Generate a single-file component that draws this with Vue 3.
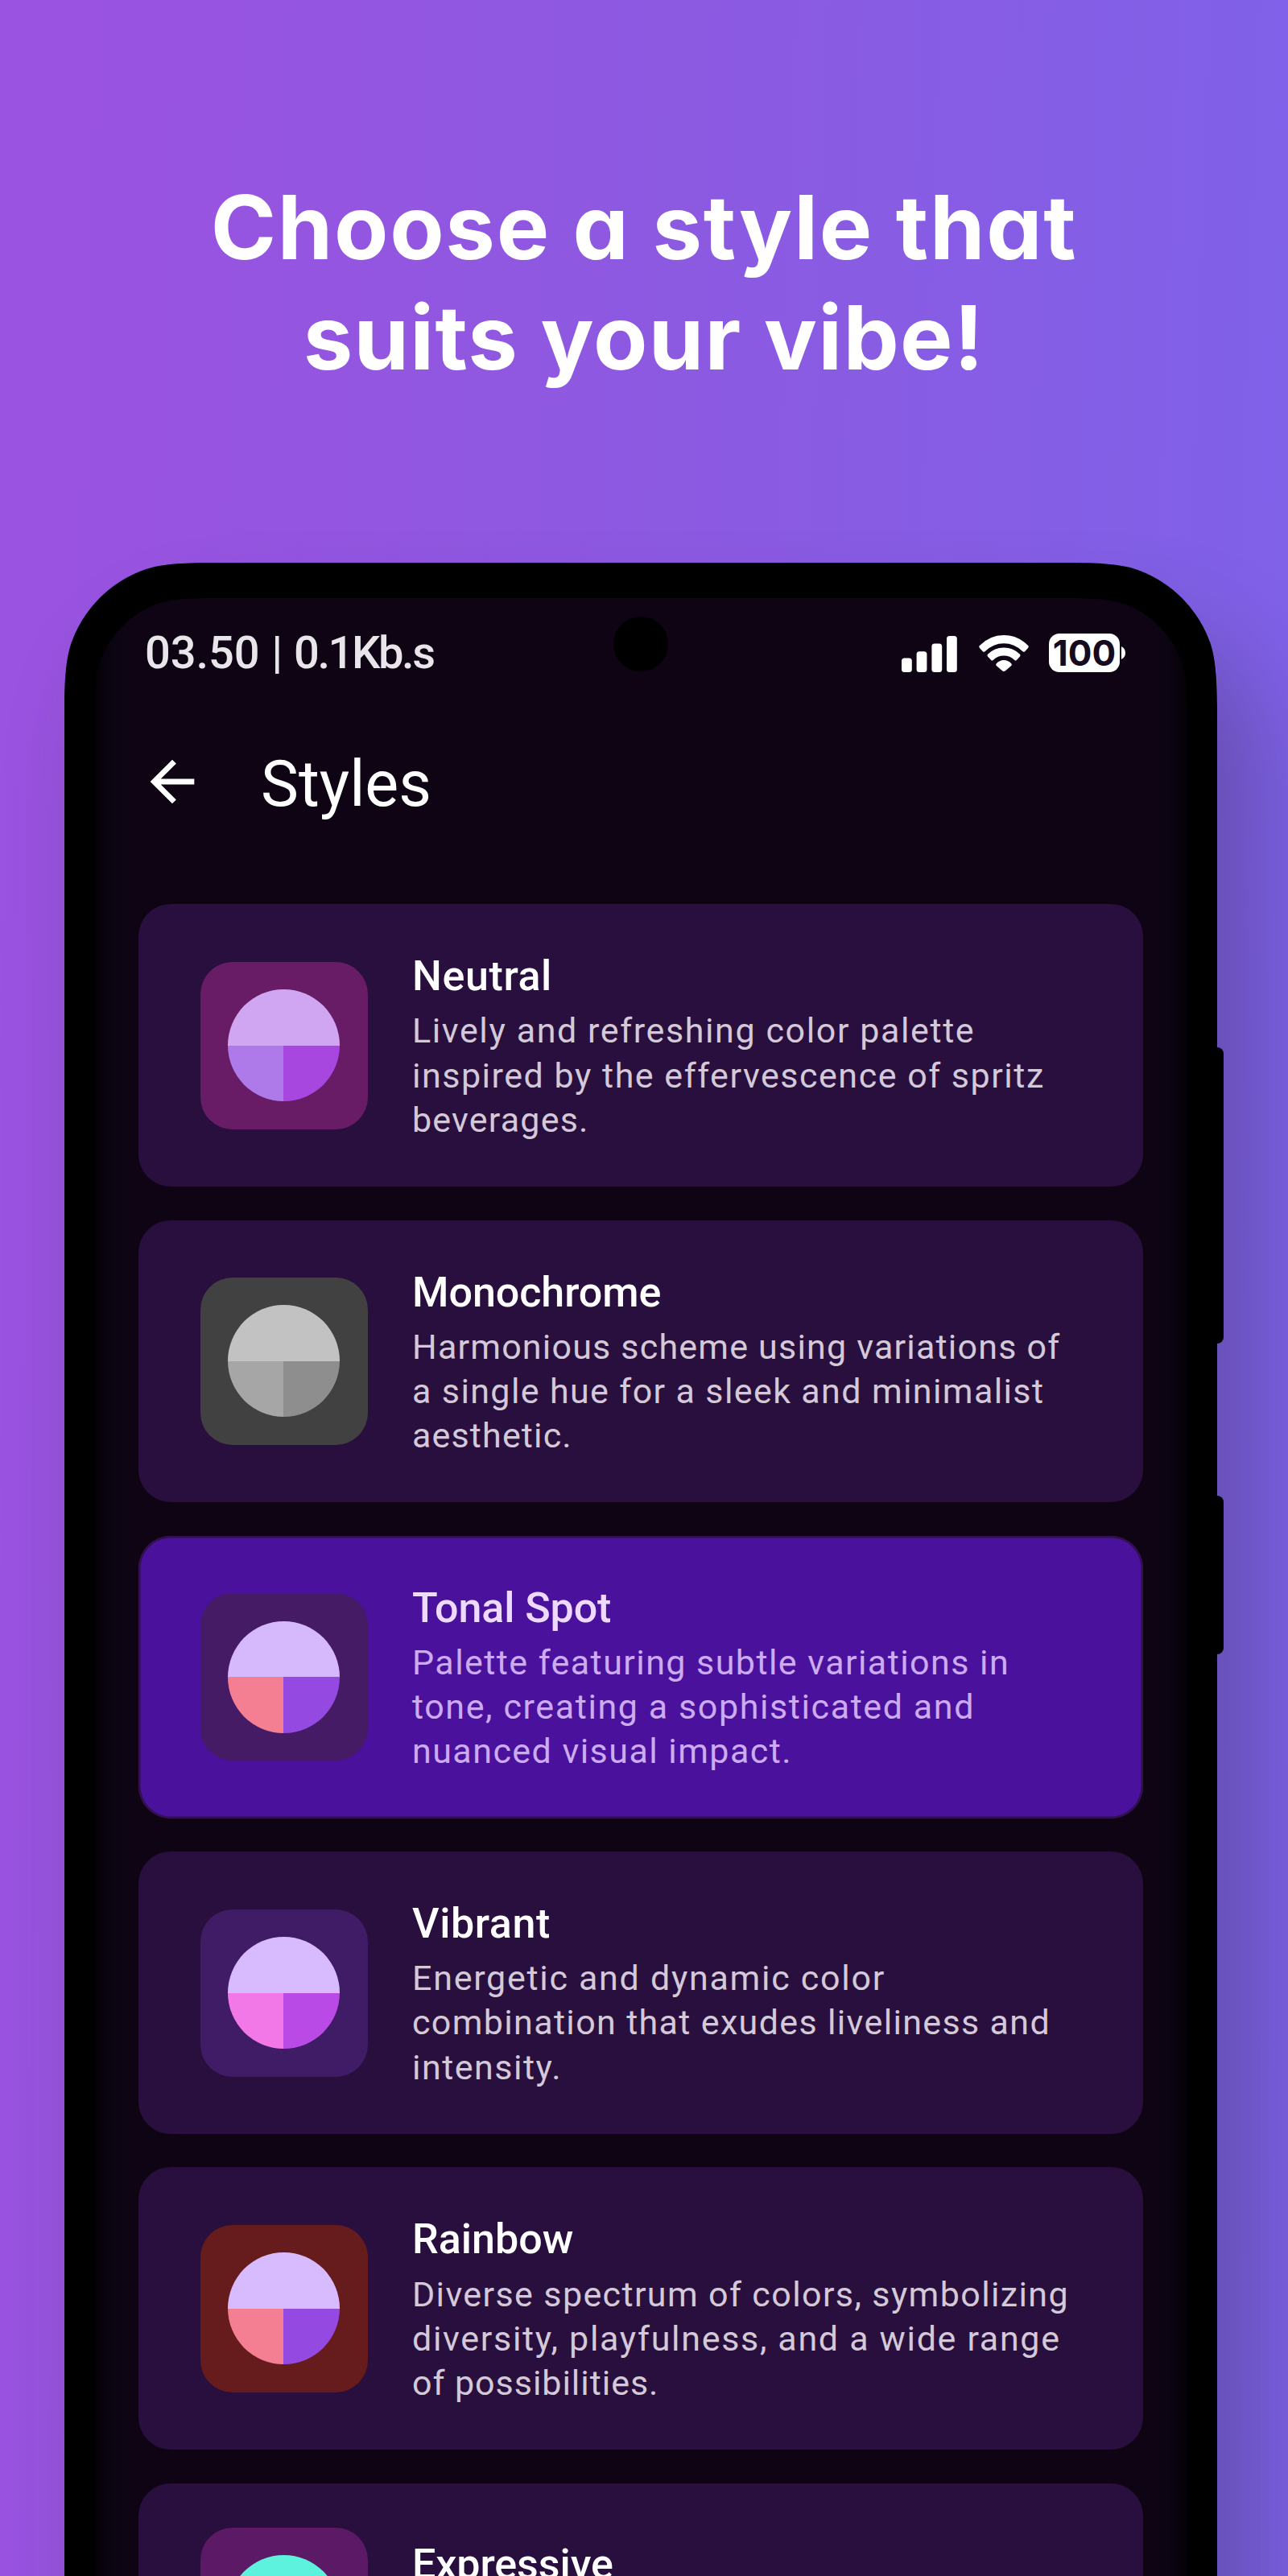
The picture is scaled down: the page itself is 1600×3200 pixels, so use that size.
<script setup>
const styles = [
  {
    name: 'Neutral',
    track: 0.6,
    tile: '#681c66',
    colors: ['#d0a6f2', '#ae7aea', '#a846e0'],
    lines: [
      ['Lively and refreshing color palette', 1.6],
      ['inspired by the effervescence of spritz', 1.52],
      ['beverages.', 1.2],
    ],
  },
  {
    name: 'Monochrome',
    track: -0.05,
    tile: '#414141',
    colors: ['#c2c2c2', '#a6a6a6', '#8e8e8e'],
    lines: [
      ['Harmonious scheme using variations of', 1.2],
      ['a single hue for a sleek and minimalist', 1.38],
      ['aesthetic.', 1.15],
    ],
  },
  {
    name: 'Tonal Spot',
    track: -0.11,
    tile: '#451b66',
    colors: ['#d6b9fd', '#f47e92', '#944ae0'],
    selected: true,
    lines: [
      ['Palette featuring subtle variations in', 1.44],
      ['tone, creating a sophisticated and', 1.6],
      ['nuanced visual impact.', 1.45],
    ],
  },
  {
    name: 'Vibrant',
    track: 0.59,
    tile: '#401b66',
    colors: ['#d8bafe', '#f278e8', '#ba4ae6'],
    lines: [
      ['Energetic and dynamic color', 1.72],
      ['combination that exudes liveliness and', 1.35],
      ['intensity.', 1.5],
    ],
  },
  {
    name: 'Rainbow',
    track: 0,
    tile: '#661c1c',
    colors: ['#d8bafe', '#f47e92', '#944ae0'],
    lines: [
      ['Diverse spectrum of colors, symbolizing', 1.38],
      ['diversity, playfulness, and a wide range', 1.68],
      ['of possibilities.', 0.96],
    ],
  },
  {
    name: 'Expressive',
    track: -0.08,
    tile: '#5c1a66',
    colors: ['#5cf2de', '#ae7aea', '#a846e0'],
    lines: [],
  },
]
</script>

<template>
  <main class="poster">
    <h1 class="headline">
      <span class="headline-a">Choose a style that</span>
      <span class="headline-b">suits your vibe!</span>
    </h1>

    <div class="phone">
      <div class="shadow"></div>
      <i class="key key-volume"></i>
      <i class="key key-power"></i>
      <div class="bezel">
        <div class="screen">
          <i class="camera"></i>
          <header class="status">
            <div class="clock"><span class="time">03.50 |</span><span class="rate">0.1Kb.s</span></div>
            <svg class="signal" viewBox="0 0 69 45" width="69" height="45">
              <rect x="0" y="27.5" width="12.8" height="17.5" rx="3.5" />
              <rect x="18.6" y="19.2" width="12.8" height="25.8" rx="3.5" />
              <rect x="37.4" y="9.4" width="12.8" height="35.6" rx="3.5" />
              <rect x="56" y="0" width="12.8" height="45" rx="3.5" />
            </svg>
            <svg class="wifi" viewBox="0 0 62 45" width="62" height="45">
              <path d="M.6 13.2Q-.2 14.6 1 16L4.800 20.200Q6 21.500 7.600 20.200Q18 10.300 31 10.300Q44 10.300 54.400 20.200Q56 21.500 57.200 20.200L61 16Q62.200 14.600 61.400 13.200Q48.500 0 31 0Q13.500 0 .6 13.200Z" />
              <path d="M11 23.800Q9.900 25 11 26.400L15.200 31Q16.300 32 17.700 31Q23.500 25.600 31 25.600Q38.500 25.600 44.300 31Q45.700 32 46.800 31L51 26.400Q52.100 25 51 23.800Q42.500 15.600 31 15.600Q19.500 15.600 11 23.800Z" />
              <path d="M21.600 35.600Q20.800 36.800 21.800 38L29 44.200Q31 45.800 33 44.200L40.200 38Q41.200 36.800 40.400 35.600Q36.500 31 31 31Q25.500 31 21.600 35.600Z" />
            </svg>
            <span class="battery">100</span>
            <svg class="nub" viewBox="0 0 5 16" width="5" height="16">
              <path d="M0 0Q5 2.500 5 8T0 16Z" />
            </svg>
          </header>

          <nav class="appbar">
            <svg class="back" viewBox="0 0 24 24" width="82" height="82">
              <path d="M20 11H7.830l5.590-5.590L12 4l-8 8 8 8 1.410-1.410L7.830 13H20v-2z" />
            </svg>
            <h2>Styles</h2>
          </nav>

          <section class="list">
            <article v-for="s in styles" :key="s.name" class="card" :class="{ selected: s.selected }">
              <div class="tile" :style="{ background: s.tile }">
                <div class="disc">
                  <i class="half" :style="{ background: s.colors[0] }"></i>
                  <i :style="{ background: s.colors[1] }"></i>
                  <i :style="{ background: s.colors[2] }"></i>
                </div>
              </div>
              <div class="copy">
                <h3 :style="{ letterSpacing: s.track + 'px' }">{{ s.name }}</h3>
                <p>
                  <span v-for="[text, track] in s.lines" :key="text" :style="{ letterSpacing: track + 'px' }">{{ text }}</span>
                </p>
              </div>
            </article>
          </section>
        </div>
      </div>
    </div>
  </main>
</template>

<style>
body {
  margin: 0;
}
</style>

<style scoped>
.poster {
  box-sizing: border-box;
  width: 1600px;
  height: 3200px;
  overflow: hidden;
  padding-top: 213.500px;
  background: linear-gradient(92deg, #9b52e0 0%, #8d59e1 48%, #7e62e9 100%);
  font-family: Roboto, "Liberation Sans", sans-serif;
}

.headline {
  margin: 0;
  height: 485.500px;
  color: #fff;
  text-align: center;
  font: 660 110px/137px Inter, sans-serif;
  font-feature-settings: "cv11";
}
.headline span {
  display: block;
  white-space: nowrap;
}
.headline-a {
  letter-spacing: 1.700px;
}
.headline-b {
  letter-spacing: 1.300px;
}

.phone {
  position: relative;
  width: 1432px;
  height: 2700px;
  margin-left: 80px;
}
.shadow {
  position: absolute;
  inset: 0;
  border-radius: 150px;
  box-shadow: 52px 90px 124px rgba(40, 40, 60, 0.320);
}
.key {
  position: absolute;
  right: -8px;
  width: 30px;
  border-radius: 8px;
  background: #000;
}
.key-volume {
  top: 602px;
  height: 368px;
}
.key-power {
  top: 1159px;
  height: 197px;
}
.bezel {
  position: relative;
  box-sizing: border-box;
  height: 100%;
  padding: 44px 37px 0;
  background: #000;
  clip-path: path("M0 180C0 140 2.800 115.400 9 98.500A150 150 0 0 1 98.500 9C115.400 2.800 140 0 180 0H1252C1292 0 1316.600 2.800 1333.500 9A150 150 0 0 1 1423 98.500C1429.200 115.400 1432 140 1432 180V2700H0Z");
}
.screen {
  position: relative;
  height: 100%;
  background: linear-gradient(90deg, #030105 0, #07020b 10px, #0b0411 22px, #0e0414 40px, #0e0414 1318px, #0b0411 1336px, #07020b 1348px, #030105 1358px);
  clip-path: path("M0 150C0 112 2.200 94 7 79A121 121 0 0 1 79 7C94 2.200 112 0 150 0H1208C1246 0 1264 2.200 1279 7A121 121 0 0 1 1351 79C1355.800 94 1358 112 1358 150V2700H0Z");
}
.camera {
  position: absolute;
  left: 645px;
  top: 23px;
  width: 68px;
  height: 68px;
  border-radius: 50%;
  background: #000;
}

.status {
  display: flex;
  align-items: center;
  height: 48px;
  padding: 44px 77px 0 63px;
  fill: #fff;
}
.clock {
  display: flex;
  flex: 1;
  color: #e8e6ea;
  font-size: 56px;
  font-weight: 500;
  line-height: 48px;
  white-space: pre;
}
.time {
  letter-spacing: -0.100px;
  word-spacing: 1px;
}
.rate {
  margin-left: 14px;
  letter-spacing: -2.400px;
}
.signal {
  margin: 2px 27px 0 0;
}
.wifi {
  margin-right: 25px;
}
.battery {
  box-sizing: border-box;
  width: 88px;
  height: 48px;
  border-radius: 13px;
  background: #fff;
  color: #150a1e;
  text-align: center;
  font: 660 44px/48px Inter, sans-serif;
}
.nub {
  margin-left: 2px;
}

.appbar {
  display: flex;
  align-items: center;
  height: 82px;
  margin-top: 95px;
  padding-left: 56px;
  color: #fff;
  fill: #fff;
}
.appbar h2 {
  margin: 0 0 0 69px;
  font-size: 79px;
  font-weight: 370;
  line-height: 88px;
  transform: translateY(3px);
}

.list {
  display: flex;
  flex-direction: column;
  gap: 41.600px;
  margin: 111.300px 55.500px 0 55px;
}
.card {
  display: flex;
  align-items: center;
  gap: 55.500px;
  padding: 55px 0 55px 76.500px;
  border-radius: 40px;
  background: #290f3d;
}
.selected {
  background: #4a119c;
  box-shadow: inset 0 0 0 2.500px #31104c;
}
.tile {
  display: grid;
  place-items: center;
  flex: none;
  width: 208px;
  height: 208px;
  border-radius: 40px;
}
.disc {
  display: grid;
  grid-template: 69.500px 69.500px / 69px 70px;
  width: 139px;
  height: 139px;
  border-radius: 50%;
  overflow: hidden;
}
.half {
  grid-column: span 2;
}
.copy {
  transform: translateY(0.400px);
}
.copy h3 {
  margin: 0 0 5.700px;
  color: #fff;
  font-size: 52px;
  font-weight: 500;
  line-height: 69.400px;
}
.copy p {
  margin: 0;
  min-height: 110.400px;
  color: #d4c9d8;
  font-size: 43px;
  font-weight: 370;
  line-height: 55.200px;
}
.copy span {
  display: block;
  white-space: nowrap;
}
.selected h3 {
  color: #efdaff;
}
.selected p {
  color: #ccabf0;
}
</style>
